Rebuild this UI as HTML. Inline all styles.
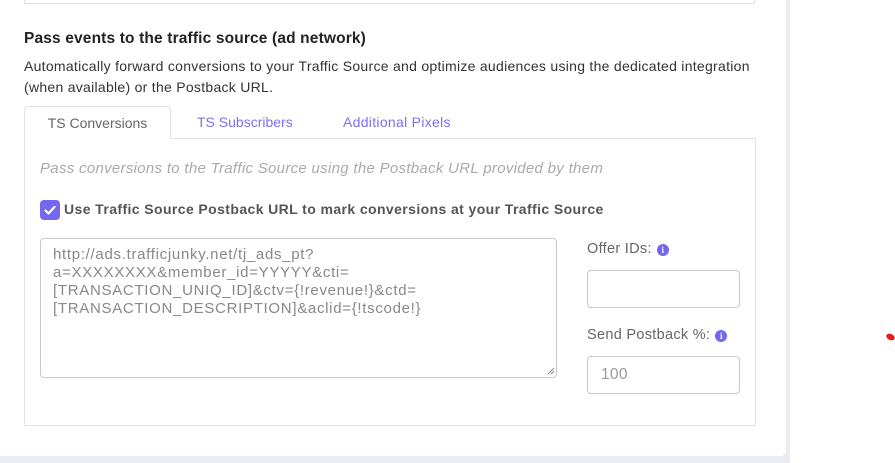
<!DOCTYPE html>
<html><head><meta charset="utf-8"><style>
*{box-sizing:border-box;margin:0;padding:0}
body{width:895px;height:463px;background:#fff;font-family:"Liberation Sans",sans-serif;position:relative;overflow:hidden}
.abs{position:absolute}
.card{left:0;top:0;width:790px;height:463px;background:#ebebf3}
.inner{left:0;top:0;width:786px;height:456px;background:#fff;border-bottom-right-radius:6px}
.topbox{left:24px;top:-5px;width:731px;height:9px;border:1px solid #e3e3e3;border-top:none}
h3{left:24px;top:30px;font-size:15.5px;font-weight:bold;color:#222;letter-spacing:.15px}
.desc{left:24px;top:56px;width:740px;font-size:14px;line-height:21px;color:#333;letter-spacing:.28px}
.tab{top:106px;height:33px;font-size:14px;line-height:32px;color:#7b6ff0}
.tab.act{left:24px;width:147px;border:1px solid #e3e3e3;border-bottom:none;border-radius:4px 4px 0 0;color:#666;text-align:center;background:#fff;z-index:2}
.panel{left:24px;top:138px;width:732px;height:288px;border:1px solid #e3e3e3}
.it{left:40px;top:160px;font-size:15px;font-style:italic;color:#aaa;letter-spacing:.3px}
.cb{left:40px;top:200px;width:20px;height:20px;background:#7367f0;border-radius:4px}
.lbl{left:64px;top:201px;font-size:14px;font-weight:bold;color:#555;letter-spacing:.4px}
.ta{left:40px;top:238px;width:517px;height:140px;border:1px solid #c8c8c8;border-radius:4px;padding:7px 12px;font-size:15px;line-height:18px;color:#888;letter-spacing:.7px}
.fl{font-size:14.5px;color:#666;letter-spacing:.3px}
.inp{left:587px;width:153px;height:38px;border:1px solid #c8c8c8;border-radius:4px;font-size:15.5px;color:#999;padding:9px 13px;letter-spacing:.3px}
.info{display:inline-block;width:12px;height:12px;border-radius:50%;background:#7367f0;color:#fff;font-size:9px;font-weight:bold;text-align:center;line-height:12px;vertical-align:0px;margin-left:5px;font-family:"Liberation Serif",serif;letter-spacing:0}
</style></head><body>
<div class="abs card"></div>
<div class="abs inner"></div>
<div class="abs topbox"></div>
<div class="abs" style="left:24px;top:3px;width:731px;height:1px;background:#e3e3e3"></div>
<h3 class="abs">Pass events to the traffic source (ad network)</h3>
<div class="abs desc">Automatically forward conversions to your Traffic Source and optimize audiences using the dedicated integration (when available) or the Postback URL.</div>
<div class="abs panel"></div>
<div class="abs tab act">TS Conversions</div>
<div class="abs tab" style="left:197px">TS Subscribers</div>
<div class="abs tab" style="left:343px;letter-spacing:.3px">Additional Pixels</div>
<div class="abs it">Pass conversions to the Traffic Source using the Postback URL provided by them</div>
<div class="abs cb"><svg width="20" height="20" viewBox="0 0 20 20"><path d="M5.5 10.5l3 3 6-6.5" stroke="#fff" stroke-width="2.2" fill="none" stroke-linecap="round" stroke-linejoin="round"/></svg></div>
<div class="abs lbl">Use Traffic Source Postback URL to mark conversions at your Traffic Source</div>
<div class="abs ta">http://ads.trafficjunky.net/tj_ads_pt?<br>a=XXXXXXXX&amp;member_id=YYYYY&amp;cti=<br>[TRANSACTION_UNIQ_ID]&amp;ctv={!revenue!}&amp;ctd=<br>[TRANSACTION_DESCRIPTION]&amp;aclid={!tscode!}</div>
<svg class="abs" style="left:547px;top:367px" width="8" height="8"><path d="M1 7L7 1M4 7L7 4" stroke="#888" stroke-width="1"/></svg>
<div class="abs fl" style="left:587px;top:241px">Offer IDs:<span class="info">i</span></div>
<div class="abs inp" style="top:270px"></div>
<div class="abs fl" style="left:587px;top:327px">Send Postback %:<span class="info">i</span></div>
<div class="abs inp" style="top:356px">100</div>
<div class="abs" style="left:886px;top:334px;width:9px;height:6px;background:#e02020;border-radius:50%;transform:rotate(25deg)"></div>
</body></html>
